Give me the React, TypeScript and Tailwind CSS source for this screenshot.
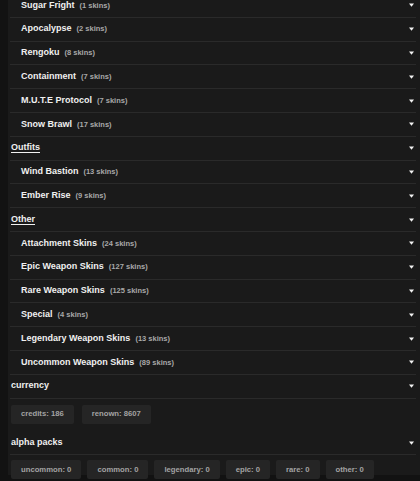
import React from "react";

type Item = { name: string; count?: number; header?: boolean; plain?: boolean };

const rows: Item[] = [
  { name: "Sugar Fright", count: 1 },
  { name: "Apocalypse", count: 2 },
  { name: "Rengoku", count: 8 },
  { name: "Containment", count: 7 },
  { name: "M.U.T.E Protocol", count: 7 },
  { name: "Snow Brawl", count: 17 },
  { name: "Outfits", header: true },
  { name: "Wind Bastion", count: 13 },
  { name: "Ember Rise", count: 9 },
  { name: "Other", header: true },
  { name: "Attachment Skins", count: 24 },
  { name: "Epic Weapon Skins", count: 127 },
  { name: "Rare Weapon Skins", count: 125 },
  { name: "Special", count: 4 },
  { name: "Legendary Weapon Skins", count: 13 },
  { name: "Uncommon Weapon Skins", count: 89 },
];

const currency = ["credits: 186", "renown: 8607"];
const packs = ["uncommon: 0", "common: 0", "legendary: 0", "epic: 0", "rare: 0", "other: 0"];

const Caret = () => (
  <svg width="5" height="4" viewBox="0 0 5 4" className="shrink-0">
    <path d="M0 0.5 H5 L2.5 3.8 Z" fill="#f2f2f2" />
  </svg>
);

const Row = ({ item }: { item: Item }) => {
  const top = item.header || item.plain;
  return (
    <div
      className={`flex h-[23.8px] items-center justify-between border-b border-[#2a2a2a] pr-[2px] ${
        top ? "pl-[1px]" : "pl-[11px]"
      }`}
    >
      <div className="flex items-baseline">
        <span className={`text-[9px] font-bold text-[#f0f0f0] ${item.header ? "underline underline-offset-2" : ""}`}>
          {item.name}
        </span>
        {item.count !== undefined && (
          <span className="ml-[5px] text-[7.5px] font-bold text-[#a9a9a9]">({item.count} skins)</span>
        )}
      </div>
      <Caret />
    </div>
  );
};

const Chips = ({ items, gap }: { items: string[]; gap: string }) => (
  <div className={`flex ${gap} pl-[1px]`}>
    {items.map((c) => (
      <div
        key={c}
        className="flex h-[19px] items-center rounded-[2px] bg-[#252525] px-[10px] text-[7.7px] font-bold text-[#a3a3a3]"
      >
        {c}
      </div>
    ))}
  </div>
);

export default function App() {
  return (
    <div
      className="h-[481px] overflow-hidden bg-[#121212] pl-2"
      style={{ fontFamily: '"Liberation Sans", Arial, sans-serif' }}
    >
      <div className="h-full bg-[#1a1a1a] pl-[2px] pr-1">
        <div className="-mt-[6px]">
          {rows.map((r) => (
            <Row key={r.name} item={r} />
          ))}
        </div>
        <Row item={{ name: "currency", plain: true }} />
        <div className="pt-[6px] pb-[8px]">
          <Chips items={currency} gap="gap-2" />
        </div>
        <Row item={{ name: "alpha packs", plain: true }} />
        <div className="pt-[5px]">
          <Chips items={packs} gap="gap-[6px]" />
        </div>
      </div>
    </div>
  );
}
